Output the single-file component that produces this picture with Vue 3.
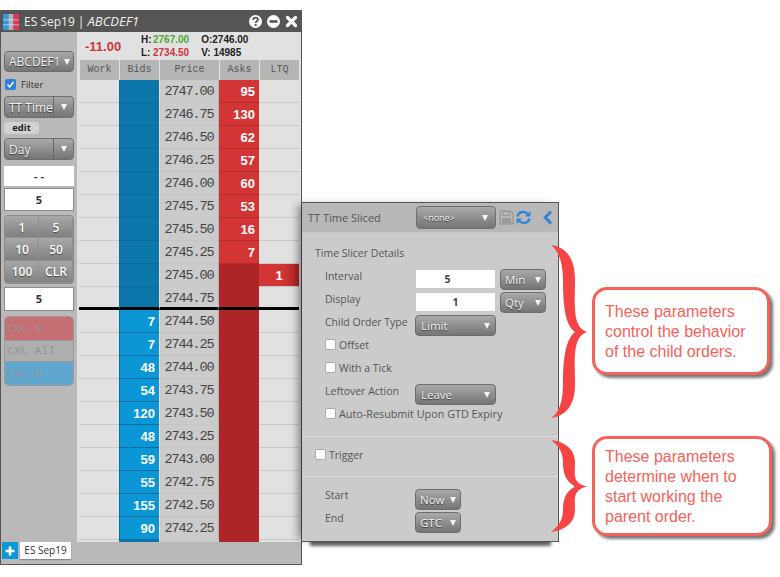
<script setup>
const asks = [95, 130, 62, 57, 60, 53, 16, 7]
const bids = [7, 7, 48, 54, 120, 48, 59, 55, 155, 90]
const prices = ['2747.00','2746.75','2746.50','2746.25','2746.00','2745.75','2745.50','2745.25','2745.00','2744.75','2744.50','2744.25','2744.00','2743.75','2743.50','2743.25','2743.00','2742.75','2742.50','2742.25']
const rows = prices.map((price, i) => ({
  price,
  ask: i < asks.length ? asks[i] : '',
  bid: i >= 10 ? bids[i - 10] : '',
  bidDark: i < 10,
  askDark: i >= asks.length,
  ltq: i === 8 ? 1 : '',
  inside: i === 9
}))
const qty = ['1', '5', '10', '50', '100', 'CLR']
const columns = ['Work', 'Bids', 'Price', 'Asks', 'LTQ']
</script>

<template>
  <div class="stage">
    <section class="window">
      <header class="titlebar">
        <svg class="logo" width="16" height="16" viewBox="0 0 16 16">
          <rect width="5.5" height="16" fill="#2f9ae0" />
          <rect x="5.5" width="5" height="16" fill="#aeb4bd" />
          <rect x="10.5" width="5.5" height="16" fill="#e0365a" />
          <rect y="5" width="16" height="1.5" fill="#ffffff" opacity=".35" />
          <rect y="10" width="16" height="1.5" fill="#ffffff" opacity=".35" />
        </svg>
        <span class="title">ES Sep19 | <i>ABCDEF1</i></span>
        <span class="title-icons">
          <svg width="13" height="13" viewBox="0 0 13 13">
            <circle cx="6.5" cy="6.5" r="6.5" fill="#fff" />
            <path d="M4.2 5c0-1.6 1.1-2.3 2.4-2.3S8.9 3.500 8.900 4.800C8.900 6.300 6.600 6.400 6.600 8" fill="none" stroke="#555" stroke-width="1.800" />
            <rect x="5.600" y="9" width="2" height="2" fill="#555" />
          </svg>
          <svg width="13" height="13" viewBox="0 0 13 13">
            <circle cx="6.500" cy="6.500" r="6.500" fill="#fff" />
            <rect x="2.500" y="5.200" width="8" height="2.600" fill="#555" />
          </svg>
          <svg width="13" height="13" viewBox="0 0 13 13">
            <path d="M2.500 2.500l8 8M10.500 2.500l-8 8" stroke="#fff" stroke-width="3.200" stroke-linecap="round" />
          </svg>
        </span>
      </header>

      <div class="body">
        <aside class="sidebar">
          <div class="select account">ABCDEF1<span class="arrow"></span></div>
          <label class="filter">
            <span class="check on">
              <svg width="11" height="11" viewBox="0 0 11 11"><path d="M2.500 5.500l2.200 2.500 3.800-5" fill="none" stroke="#fff" stroke-width="1.600" /></svg>
            </span>
            Filter
          </label>
          <div class="select split">
            <span class="split-text">TT Time</span>
            <span class="split-arrow"><span class="arrow"></span></span>
          </div>
          <div class="edit">edit</div>
          <div class="select split day">
            <span class="split-text">Day</span>
            <span class="split-arrow"><span class="arrow"></span></span>
          </div>
          <div class="field blank">- -</div>
          <div class="field five">5</div>
          <div class="qty-grid">
            <span v-for="q in qty" :key="q" class="qty">{{ q }}</span>
          </div>
          <div class="field five second">5</div>
          <div class="cxl">
            <span class="cxl-s">CXL S</span>
            <span class="cxl-a">CXL All</span>
            <span class="cxl-b">CXL B</span>
          </div>
        </aside>

        <main class="ladder">
          <div class="stats">
            <span class="change">-11.00</span>
            <div class="hl">
              <span><span class="key">H:</span><b class="green">2767.00</b></span>
              <span><span class="key">L:</span><b class="red">2734.50</b></span>
            </div>
            <div class="ov">
              <span>O:2746.00</span>
              <span>V: 14985</span>
            </div>
          </div>
          <div class="grid-head">
            <span v-for="c in columns" :key="c">{{ c }}</span>
          </div>
          <div class="rows">
            <div v-for="r in rows" :key="r.price" class="row" :class="{ inside: r.inside }">
              <span class="cell"></span>
              <span class="cell bid" :class="{ dark: r.bidDark }">{{ r.bid }}</span>
              <span class="cell price">{{ r.price }}</span>
              <span class="cell ask" :class="{ dark: r.askDark }">{{ r.ask }}</span>
              <span class="cell ltq" :class="{ hit: r.ltq }">{{ r.ltq }}</span>
            </div>
            <div class="row stub">
              <span></span>
              <span class="stub-bid"></span>
              <span class="stub-price"></span>
              <span class="stub-ask"></span>
              <span></span>
            </div>
          </div>
        </main>
      </div>

      <footer class="tabs">
        <span class="plus">
          <svg width="10" height="10" viewBox="0 0 10 10"><path d="M5 .5v9M.5 5h9" stroke="#fff" stroke-width="2.600" /></svg>
        </span>
        <span class="tab">ES Sep19</span>
      </footer>
    </section>

    <section class="panel">
      <header class="panel-head">
        <span class="panel-title">TT Time Sliced</span>
        <div class="select none">&lt;none&gt;<span class="arrow"></span></div>
        <svg class="save" width="15" height="15" viewBox="0 0 15 15">
          <path d="M1 1h10.500L14 3.500V14H1z" fill="none" stroke="#9a9a9a" stroke-width="1.400" />
          <rect x="4" y="1.500" width="6.500" height="4" fill="none" stroke="#9a9a9a" stroke-width="1.200" />
          <rect x="3" y="8" width="9" height="5.500" fill="#9a9a9a" />
        </svg>
        <svg class="refresh" width="15" height="15" viewBox="0 0 15 15">
          <path d="M1.500 6.500C2.200 3.500 4.500 2 7.200 2c1.900 0 3.300.8 4.300 1.800" fill="none" stroke="#2f86d8" stroke-width="2.400" />
          <path d="M14.500 1v5.500H9z" fill="#2f86d8" />
          <path d="M13.500 8.500C12.800 11.500 10.500 13 7.800 13c-1.900 0-3.300-.8-4.300-1.800" fill="none" stroke="#2f86d8" stroke-width="2.400" />
          <path d="M.5 14V8.500H6z" fill="#2f86d8" />
        </svg>
        <svg class="chevron" width="10" height="15" viewBox="0 0 10 15">
          <path d="M8 1.500L2.200 7.500 8 13.500" fill="none" stroke="#2f86d8" stroke-width="3" />
        </svg>
      </header>

      <div class="section details">
        <div class="section-title">Time Slicer Details</div>
        <div class="p-row">
          <span class="p-label">Interval</span>
          <span class="p-input first">5</span>
          <div class="select unit">Min<span class="arrow"></span></div>
        </div>
        <div class="p-row">
          <span class="p-label">Display</span>
          <span class="p-input">1</span>
          <div class="select unit">Qty<span class="arrow"></span></div>
        </div>
        <div class="p-row">
          <span class="p-label">Child Order Type</span>
          <div class="select wide">Limit<span class="arrow"></span></div>
        </div>
        <div class="p-row"><span class="check"></span>Offset</div>
        <div class="p-row"><span class="check"></span>With a Tick</div>
        <div class="p-row">
          <span class="p-label">Leftover Action</span>
          <div class="select wide">Leave<span class="arrow"></span></div>
        </div>
        <div class="p-row long"><span class="check"></span>Auto-Resubmit Upon GTD Expiry</div>
      </div>

      <div class="section trigger"><span class="check"></span>Trigger</div>

      <div class="section timing">
        <div class="p-row">
          <span class="p-label">Start</span>
          <div class="select short">Now<span class="arrow"></span></div>
        </div>
        <div class="p-row">
          <span class="p-label">End</span>
          <div class="select short">GTC<span class="arrow"></span></div>
        </div>
      </div>
    </section>

    <svg class="braces" width="50" height="305" viewBox="545 235 50 305">
      <path fill="#f64444" d="M551 245C566 247 575 258 575 280C575 305 572 327 587 332C572 337 575 360 575 385C575 405 566 416 551 418C558 414 563 403 563 385C563 360 565 340 575 332C565 325 563 305 563 280C563 262 558 250 551 245Z" />
      <path fill="#f64444" d="M551 440C566 442 575 450 575 462C575 475 572 483 587 486.500C572 490 575 500 575 510C575 522 566 530 551 532C558 527 563 520 563 510C563 500 565 492 575 486.500C565 481 563 472 563 462C563 452 558 445 551 440Z" />
    </svg>

    <div class="callout one">These parameters<br />control the behavior<br />of the child orders.</div>
    <div class="callout two">These parameters<br />determine when to<br />start working the<br />parent order.</div>
  </div>
</template>

<style>
html, body { margin: 0; background: #fff; }
</style>

<style scoped>
.stage {
  position: relative;
  width: 780px;
  height: 577px;
  overflow: hidden;
  background: #fff;
  font-family: "Open Sans", "Liberation Sans", sans-serif;
}

/* window */
.window {
  position: absolute;
  left: 0;
  top: 10px;
  width: 302px;
  height: 555px;
  box-sizing: border-box;
  border: 1px solid #555;
  border-top: 0;
  background: #b9b9b9;
  display: flex;
  flex-direction: column;
}
.titlebar {
  height: 22px;
  flex: none;
  background: #555;
  display: flex;
  align-items: center;
  padding: 0 3px 0 2px;
  color: #f2f2f2;
}
.logo { margin-top: 2px; }
.title { margin-left: 5px; font-size: 12px; }
.title i { font-style: italic; font-size: 13px; }
.title-icons { margin: 1px 0 0 auto; display: flex; gap: 5px; align-items: center; }

.body { display: flex; height: 510px; flex: none; }
.sidebar {
  width: 76px;
  flex: none;
  box-sizing: border-box;
  padding: 19px 3px 0;
  display: flex;
  flex-direction: column;
}

/* shared select */
.select {
  position: relative;
  box-sizing: border-box;
  height: 21px;
  display: flex;
  align-items: center;
  justify-content: space-between;
  padding: 0 5px;
  border: 1px solid #6d6d6d;
  border-radius: 4px;
  background: linear-gradient(#a9a9a9, #757575);
  color: #f4f4f4;
  font-size: 11.500px;
  text-shadow: 0 1px 1px #333;
}
.arrow {
  flex: none;
  width: 0;
  height: 0;
  border-left: 3.500px solid transparent;
  border-right: 3.500px solid transparent;
  border-top: 6px solid #f4f4f4;
}
.account { padding: 0 3px 0 4px; font-size: 12px; }
.filter {
  height: 18px;
  margin-top: 4px;
  padding-bottom: 2px;
  box-sizing: border-box;
  display: flex;
  align-items: center;
  color: #333;
  font-size: 9.500px;
}
.check {
  box-sizing: border-box;
  flex: none;
  width: 11px;
  height: 11px;
  margin-right: 3px;
  border-radius: 2px;
  background: #fff;
  border: 1px solid #aaa;
  display: inline-flex;
}
.check.on { background: #2a7fe0; border: 0; margin: 0 5px 0 1px; }
.split { height: 22px; padding: 0; margin-top: 2px; font-size: 12px; }
.split-text { padding-left: 4px; }
.split-arrow {
  width: 19px;
  height: 100%;
  display: flex;
  align-items: center;
  justify-content: center;
  border-left: 1px solid #666;
}
.edit {
  align-self: flex-start;
  box-sizing: border-box;
  width: 35px;
  height: 12px;
  margin-top: 4px;
  line-height: 12px;
  text-align: center;
  border-radius: 2px;
  background: #d2d2d2;
  color: #222;
  font-size: 9.500px;
  font-weight: 700;
}
.day { margin-top: 4px; }
.field {
  box-sizing: border-box;
  background: #fff;
  color: #333;
  text-align: center;
  font-size: 11px;
  font-weight: 700;
}
.blank { height: 20px; line-height: 20px; margin-top: 6px; }
.five { height: 23px; line-height: 21px; margin-top: 2px; border: 1px solid #8c8c8c; }
.second { height: 24px; margin-top: 3px; line-height: 22px; }
.qty-grid {
  height: 69px;
  margin-top: 4px;
  box-sizing: border-box;
  display: grid;
  grid-template-columns: 1fr 1fr;
  grid-template-rows: repeat(3, 1fr);
  border: 1px solid #8a8a8a;
  border-radius: 4px;
  overflow: hidden;
}
.qty {
  display: flex;
  align-items: center;
  justify-content: center;
  background: linear-gradient(#a8a8a8, #7f7f7f);
  color: #fff;
  font-size: 12px;
  font-weight: 600;
  text-shadow: 0 1px 1px #444;
  box-shadow: inset -1px -1px 0 #8f8f8f;
}
.cxl {
  margin-top: 5px;
  height: 70px;
  box-sizing: border-box;
  display: grid;
  grid-template-rows: repeat(3, 1fr);
  border: 1px solid #999;
  border-radius: 5px;
  overflow: hidden;
  font-family: "Liberation Mono", monospace;
  font-size: 11.500px;
  color: #949494;
}
.cxl span { display: flex; align-items: center; padding-left: 2px; }
.cxl-s { background: #c56f73; }
.cxl-a { background: #aeaeae; border-top: 1px solid #999; border-bottom: 1px solid #999; }
.cxl-b { background: #60a7cf; }

/* ladder */
.ladder {
  width: 224px;
  flex: none;
  box-sizing: border-box;
  padding: 0 2px;
  background: #e1e1e1;
  display: flex;
  flex-direction: column;
}
.stats {
  height: 28px;
  flex: none;
  display: flex;
  align-items: flex-start;
  font-size: 10px;
  font-weight: 700;
  font-family: "Liberation Sans", sans-serif;
  color: #222;
}
.change {
  width: 62px;
  padding: 7px 0 0 6px;
  box-sizing: border-box;
  color: #c8353a;
  font-size: 13px;
}
.hl, .ov { display: flex; flex-direction: column; line-height: 13px; padding-top: 1px; }
.ov { margin-left: 12px; }
.key { display: inline-block; width: 12px; }
.green { color: #4fa82e; }
.red { color: #d0333a; }
.grid-head, .row {
  display: grid;
  grid-template-columns: 40px 40px 60px 40px 40px;
}
.grid-head { height: 20px; flex: none; }
.grid-head span {
  margin-left: 1px;
  background: #b5b5b5;
  text-align: center;
  line-height: 19px;
  color: #555;
  font-family: "Liberation Mono", monospace;
  font-size: 10px;
}
.rows { height: 462px; overflow: hidden; }
.row { height: 23px; }
.stub { height: 2px; }
.stub-bid { background: #0b76aa; }
.stub-price { background: #cbcbcb; }
.stub-ask { background: #ad2526; }
.cell {
  box-sizing: border-box;
  height: 23px;
  border-bottom: 1px solid #c7c7c7;
  line-height: 23px;
  text-align: right;
  padding-right: 4px;
  color: #fff;
  font-family: "Liberation Sans", sans-serif;
  font-size: 13px;
  font-weight: 700;
}
.bid { background: #0b96d6; border-bottom-color: #0b6c9c; border-left: 1px solid #0b6c9c; }
.bid.dark { background: #0b76aa; }
.price {
  background: #cbcbcb;
  color: #444;
  border-left: 1px solid #e1e1e1;
  border-right: 1px solid #b5b5b5;
  text-align: center;
  padding: 0;
  font-family: "Liberation Mono", monospace;
  font-size: 13.500px;
  font-weight: 400;
  letter-spacing: -1.100px;
}
.ask { background: #d33536; border-bottom-color: #b52a2b; padding-right: 4px; }
.ask.dark { background: #ad2526; border-bottom-color: #ad2526; }
.ltq.hit {
  background: linear-gradient(90deg, #d33536 60%, #ad2526);
  text-align: center;
  padding: 0;
  margin-bottom: 0;
}
.inside .cell { border-bottom: 3px solid #000; }

/* tab strip */
.tabs {
  flex: 1;
  display: flex;
  align-items: flex-start;
  gap: 2px;
  padding-left: 1px;
}
.plus {
  width: 16px;
  height: 17px;
  background: #0b96d6;
  display: flex;
  align-items: center;
  justify-content: center;
}
.tab {
  width: 51px;
  height: 17px;
  background: #fff;
  color: #333;
  font-size: 10px;
  line-height: 16px;
  text-align: center;
  box-shadow: 0 1px 1px #888;
}

/* floating panel */
.panel {
  position: absolute;
  left: 302px;
  top: 202px;
  width: 257px;
  height: 340px;
  box-sizing: border-box;
  border: 1px solid #555;
  border-left: 0;
  background: #cbcbcb;
  color: #555;
  font-size: 10.500px;
  box-shadow: -7px 0 8px -3px rgba(0, 0, 0, .4), 0 12px 3px -8px rgba(0, 0, 0, .6);
}
.panel-head {
  height: 30px;
  box-sizing: border-box;
  background: #b8b8b8;
  display: flex;
  align-items: center;
  padding-left: 6px;
  border-bottom: 1px solid #c8c8c8;
  font-size: 11px;
}
.panel-title { width: 108px; flex: none; }
.none {
  width: 80px;
  height: 23px;
  font-size: 9px;
  padding: 0 7px 0 6px;
  flex: none;
}
.save { margin-left: 3px; }
.refresh { margin-left: 2px; }
.chevron { margin-left: 12px; }

.section { border-bottom: 1px solid #dcdcdc; box-sizing: border-box; }
.details { height: 204px; padding: 10px 0 0 23px; }
.section-title { height: 20px; line-height: 20px; margin: 0 0 1px -10px; font-size: 10.500px; }
.p-row {
  height: 23px;
  display: flex;
  align-items: center;
  font-size: 10.500px;
}
.long { font-size: 10.800px; }
.p-label { width: 90px; flex: none; align-self: flex-start; line-height: 23px; }
.details .p-label { padding-top: 1px; }
.p-row > .select { align-self: flex-start; margin-top: 5px; flex: none; }
.p-input {
  width: 79px;
  height: 18px;
  margin: 6px 0 0 1px;
  align-self: flex-start;
  flex: none;
  background: #fff;
  color: #444;
  text-align: center;
  line-height: 18px;
  font-size: 10.500px;
  font-weight: 700;
}
.p-input.first { text-indent: -16px; }
.unit { width: 46px; margin-left: 5px; padding: 0 4px 0 4px; }
.wide { width: 81px; }
.trigger {
  height: 40px;
  display: flex;
  align-items: center;
  padding: 0 0 4px 13px;
}
.timing { border-bottom: 0; padding: 7px 0 0 23px; }
.short { width: 46px; padding: 0 4px; }

/* annotations */
.braces { position: absolute; left: 545px; top: 235px; }
.callout {
  position: absolute;
  left: 592px;
  box-sizing: border-box;
  padding-left: 10px;
  background: #fff;
  border: 3px solid #f5625a;
  border-radius: 15px;
  box-shadow: 3px 3px 3px #777;
  color: #f5625a;
  font-family: "Liberation Sans", sans-serif;
  font-size: 16px;
  line-height: 20px;
}
.one { top: 287px; width: 178px; height: 88px; padding-top: 12px; }
.two { top: 436px; width: 180px; height: 100px; padding-top: 8px; }
</style>
